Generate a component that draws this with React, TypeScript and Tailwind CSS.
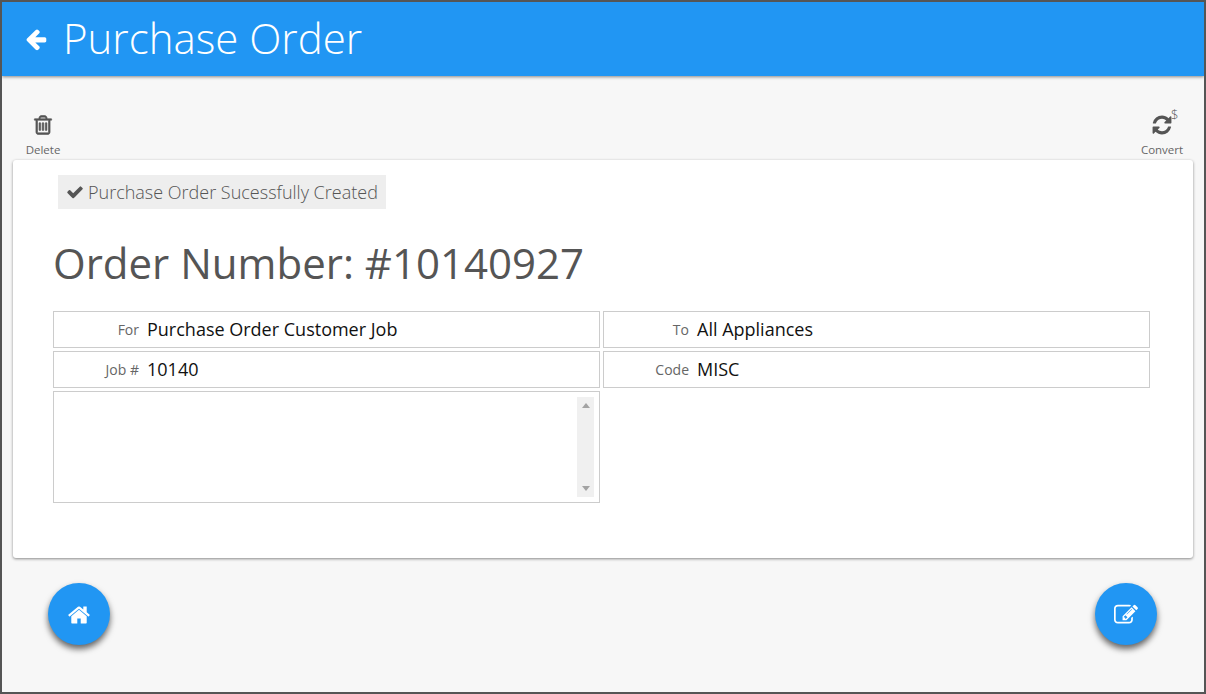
import React from "react";

const arrow = "M1664 896v128q0 53-32.5 89.5t-84.5 36.5h-704l293 294q38 36 38 90t-38 90l-75 76q-37 37-90 37-52 0-91-37l-651-652q-37-37-37-90 0-52 37-91l651-650q38-38 91-38 52 0 90 38l75 74q38 38 38 91t-38 91l-293 293h704q52 0 84.5 37.5t32.5 90.5z";
const check = "M1671 566q0 40-28 68l-724 724-136 136q-28 28-68 28t-68-28l-136-136-362-362q-28-28-28-68t28-68l136-136q28-28 68-28t68 28l294 295 656-657q28-28 68-28t68 28l136 136q28 28 28 68z";
const trash = "M704 736v576q0 14-9 23t-23 9h-64q-14 0-23-9t-9-23v-576q0-14 9-23t23-9h64q14 0 23 9t9 23zm256 0v576q0 14-9 23t-23 9h-64q-14 0-23-9t-9-23v-576q0-14 9-23t23-9h64q14 0 23 9t9 23zm256 0v576q0 14-9 23t-23 9h-64q-14 0-23-9t-9-23v-576q0-14 9-23t23-9h64q14 0 23 9t9 23zm128 724v-948h-896v948q0 22 7 40.5t14.5 27 10.5 8.5h832q3 0 10.5-8.5t14.5-27 7-40.5zm-672-1076h448l-48-117q-7-9-17-11h-317q-10 2-17 11zm928 32v64q0 14-9 23t-23 9h-96v948q0 83-47 143.5t-113 60.5h-832q-66 0-113-58.5t-47-141.5v-952h-96q-14 0-23-9t-9-23v-64q0-14 9-23t23-9h309l70-167q15-37 54-63t79-26h320q40 0 79 26t54 63l70 167h309q14 0 23 9t9 23z";
const refresh = "M1639 1056q0 5-1 7-64 268-268 434.5t-478 166.5q-146 0-282.5-55t-243.5-157l-129 129q-19 19-45 19t-45-19-19-45v-448q0-26 19-45t45-19h448q26 0 45 19t19 45-19 45l-137 137q71 66 161 102t187 36q134 0 250-65t186-179q11-17 53-117 8-23 30-23h192q13 0 22.5 9.5t9.5 22.5zm25-800v448q0 26-19 45t-45 19h-448q-26 0-45-19t-19-45 19-45l138-138q-148-137-349-137-134 0-250 65t-186 179q-11 17-53 117-8 23-30 23h-199q-13 0-22.5-9.5t-9.5-22.5v-7q65-268 270-434.5t480-166.5q146 0 284 55.5t245 156.5l130-129q19-19 45-19t45 19 19 45z";
const home = "M1472 992v480q0 26-19 45t-45 19h-384v-384h-256v384h-384q-26 0-45-19t-19-45v-480q0-1 .5-3t.5-3l575-474 575 474q1 2 1 6zm223-69l-62 74q-8 9-21 11h-3q-13 0-21-7l-692-577-692 577q-12 8-24 7-13-2-21-11l-62-74q-8-10-7-23.5t11-21.5l719-599q32-26 76-26t76 26l244 204v-195q0-14 9-23t23-9h192q14 0 23 9t9 23v408l219 182q10 8 11 21.5t-7 23.5z";
const edit = "M888 1184l116-116-152-152-116 116v56h96v96h56zm440-720q-16-16-33 1l-350 350q-17 17-1 33t33-1l350-350q17-17 1-33zm80 594v190q0 119-84.5 203.5t-203.5 84.5h-832q-119 0-203.5-84.5t-84.5-203.5v-832q0-119 84.5-203.5t203.5-84.5h832q63 0 117 25 15 7 18 23 3 17-9 29l-49 49q-14 14-32 8-23-6-45-6h-832q-66 0-113 47t-47 113v832q0 66 47 113t113 47h832q66 0 113-47t47-113v-126q0-13 9-22l64-64q15-15 35-7t20 29zm-96-738l288 288-672 672h-288v-288zm444 132l-92 92-288-288 92-92q28-28 68-28t68 28l152 152q28 28 28 68t-28 68z";

function Fa({ d, className }: { d: string; className: string }) {
  return (
    <svg viewBox="0 0 1792 1792" fill="currentColor" className={className}>
      <path d={d} />
    </svg>
  );
}

function Field({ label, value }: { label: string; value: string }) {
  return (
    <div className="flex h-[37px] items-center border border-[#ccc]">
      <span className="w-[85px] text-right text-[14px] text-[#666]">{label}</span>
      <span className="ml-2 text-[18px] text-[#111]">{value}</span>
    </div>
  );
}

function Fab({ d }: { d: string }) {
  return (
    <button className="flex h-[62px] w-[62px] items-center justify-center rounded-full bg-[#2196f3] pt-[2px] text-white shadow-[0_4px_6px_rgba(0,0,0,0.6)]">
      <Fa d={d} className="h-[24px] w-[24px]" />
    </button>
  );
}

export default function App() {
  return (
    <div className="flex h-[694px] w-[1206px] flex-col overflow-hidden border-2 border-[#555] bg-[#f7f7f7] font-['Open_Sans',sans-serif] text-[#555]">
      <header className="flex h-[74px] shrink-0 items-center bg-[#2196f3] pl-[22px] text-white shadow-[0_1px_3px_rgba(0,0,0,0.45)]">
        <Fa d={arrow} className="h-[24px] w-[24px]" />
        <h1 className="mb-[2px] ml-[15px] text-[42px] font-light leading-none">Purchase Order</h1>
      </header>

      <div className="flex h-[84px] shrink-0 items-end justify-between pb-[2px] pl-[24px] pr-[21px]">
        <div className="flex w-[34px] flex-col items-center">
          <Fa d={trash} className="h-[22px] w-[22px] stroke-[#555] stroke-[50]" />
          <span className="mt-[6px] text-[11.5px] leading-[16px] text-[#666]">Delete</span>
        </div>
        <div className="flex w-[42px] flex-col items-center">
          <div className="relative h-[22px] w-[22px]">
            <Fa d={refresh} className="h-[22px] w-[22px]" />
            <span className="absolute left-[20px] top-[-7px] text-[13px] font-light leading-[14px]">$</span>
          </div>
          <span className="mt-[6px] text-[11.5px] leading-[16px] text-[#666]">Convert</span>
        </div>
      </div>

      <main className="z-10 mx-[11px] h-[398px] shrink-0 rounded-[3px] bg-white pl-[40px] pr-[43px] pt-[15px] shadow-[0_1px_3px_rgba(0,0,0,0.45)]">
        <div className="ml-[5px] flex h-[34px] w-[328px] items-center bg-[#eee] px-[8px] text-[18px] font-light">
          <Fa d={check} className="mr-[4px] h-[18px] w-[18px] shrink-0" />
          <span className="whitespace-nowrap">Purchase Order Sucessfully Created</span>
        </div>
        <h2 className="mt-[25px] text-[42px] leading-[58px]">Order Number: #10140927</h2>
        <div className="mt-[19px] grid grid-cols-2 gap-[3px]">
          <Field label="For" value="Purchase Order Customer Job" />
          <Field label="To" value="All Appliances" />
          <Field label="Job #" value="10140" />
          <Field label="Code" value="MISC" />
          <div className="flex h-[112px] justify-end border border-[#ccc] py-[5px] pr-[5px]">
            <div className="flex w-[17px] flex-col items-center justify-between bg-[#f0f0f0] py-[6px]">
              <div className="h-0 w-0 border-x-[4px] border-b-[5px] border-x-transparent border-b-[#a3a3a3]" />
              <div className="h-0 w-0 border-x-[4px] border-t-[5px] border-x-transparent border-t-[#a3a3a3]" />
            </div>
          </div>
        </div>
      </main>

      <footer className="flex justify-between pl-[46px] pr-[47px] pt-[25px]">
        <Fab d={home} />
        <Fab d={edit} />
      </footer>
    </div>
  );
}
